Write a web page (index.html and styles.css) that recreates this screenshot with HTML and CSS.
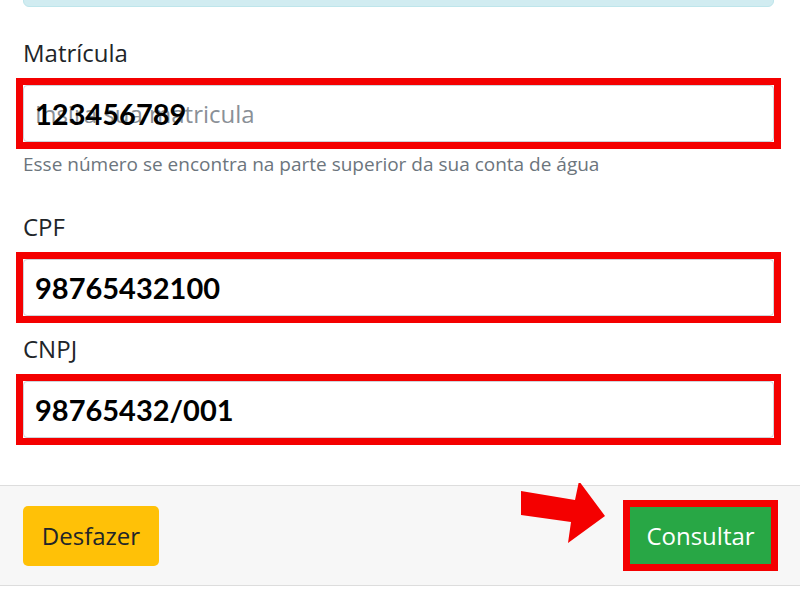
FILE: index.html
```html
<!DOCTYPE html>
<html lang="pt-BR">
<head>
    <meta charset="UTF-8">
    <meta name="viewport" content="width=device-width, initial-scale=1.0">
    <title>Consulta de Débitos</title>
    <link rel="stylesheet" href="styles.css">
</head>
<body>
    <div class="content">
        <div class="alert"></div>

        <div class="form-group first">
            <label for="matricula">Matrícula</label>
            <div class="mark">
                <input type="text" id="matricula" placeholder="Insira sua matricula">
                <span class="typed">123456789</span>
            </div>
            <small class="help">Esse número se encontra na parte superior da sua conta de água</small>
        </div>

        <div class="form-group cpf">
            <label for="cpf">CPF</label>
            <div class="mark">
                <input type="text" id="cpf" class="filled" value="98765432100">
            </div>
        </div>

        <div class="form-group">
            <label for="cnpj">CNPJ</label>
            <div class="mark">
                <input type="text" id="cnpj" class="filled" value="98765432/001">
            </div>
        </div>
    </div>

    <div class="footer">
        <button type="button" class="btn btn-warning">Desfazer</button>
        <svg class="arrow" width="90" height="70" viewBox="0 0 90 70">
            <polygon points="1,8 55,17 59,-2 85,33 48,60 51,39 1,32" fill="#f40000"/>
        </svg>
        <button type="submit" class="btn btn-success">Consultar</button>
    </div>
</body>
</html>
```

FILE: styles.css
```css
body {
    margin: 0;
    font-family: "Open Sans", "Noto Sans", sans-serif;
    color: #212529;
    background: #fff;
}
.content {
    padding: 0 26px 0 23px;
}
.alert {
    height: 18px;
    margin-top: -13px;
    background-color: #d1ecf1;
    border: 1px solid #bee5eb;
    border-radius: 6px;
}
.form-group {
    margin-top: 8px;
}
.form-group.first {
    margin-top: 28px;
}
.form-group.cpf {
    margin-top: 30px;
}
label {
    display: block;
    font-size: 24px;
    line-height: 36px;
    margin-bottom: 7px;
}
.mark {
    position: relative;
    margin: 0 -7px;
    border: 7px solid #f40000;
}
input {
    display: block;
    box-sizing: border-box;
    width: 100%;
    height: 57px;
    padding: 0 11px;
    border: 1px solid #ced4da;
    border-radius: 4px;
    font-family: "Open Sans", "Noto Sans", sans-serif;
    font-size: 24px;
    color: #495057;
}
input::placeholder {
    color: #8a9097;
}
input.filled,
.typed {
    font-family: Lato, sans-serif;
    font-weight: bold;
    font-size: 29px;
    color: #000;
}
.typed {
    position: absolute;
    left: 12px;
    top: 0;
    line-height: 57px;
}
.help {
    display: block;
    margin-top: 1px;
    font-size: 19px;
    line-height: 29px;
    color: #6c757d;
}
.footer {
    position: relative;
    margin-top: 40px;
    height: 99px;
    padding: 0 29px 0 23px;
    display: flex;
    align-items: center;
    justify-content: space-between;
    background-color: #f7f7f7;
    border-top: 1px solid #dddddd;
    border-bottom: 1px solid #dddddd;
}
.btn {
    font-family: "Open Sans", "Noto Sans", sans-serif;
    font-size: 24px;
    border: none;
    cursor: pointer;
}
.btn-warning {
    height: 60px;
    width: 136px;
    background-color: #ffc107;
    color: #212529;
    border-radius: 5px;
}
.btn-success {
    height: 57px;
    width: 141px;
    background-color: #28a745;
    color: #fff;
    border-radius: 0;
    outline: 7px solid #f40000;
}
.arrow {
    position: absolute;
    left: 520px;
    top: -3px;
}
```
